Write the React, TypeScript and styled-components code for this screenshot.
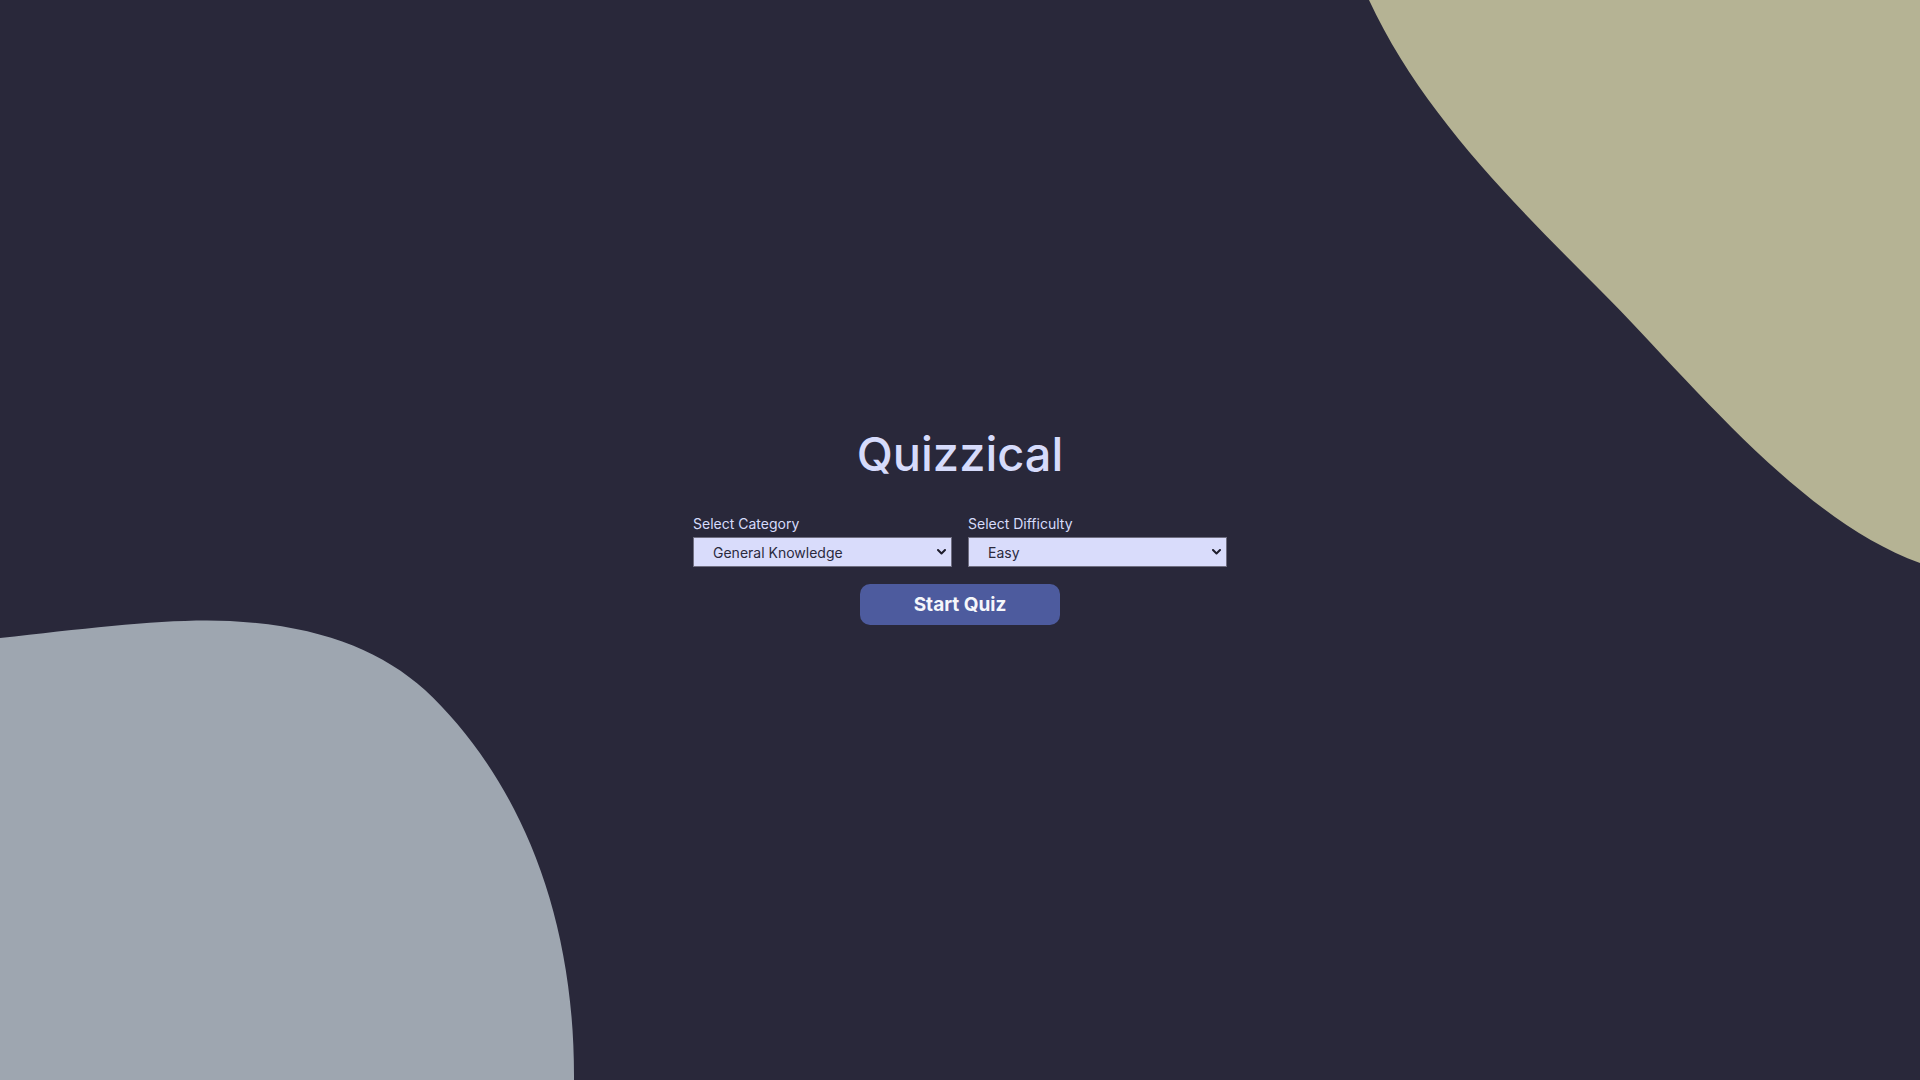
import React, { useState } from "react";
import styled, { createGlobalStyle } from "styled-components";

const GlobalStyle = createGlobalStyle`
  * { box-sizing: border-box; }
  html, body { margin: 0; padding: 0; }
  body {
    background: #29283a;
    font-family: Inter, "Noto Sans", sans-serif;
    overflow: hidden;
  }
`;

const Page = styled.div`
  position: relative;
  width: 100vw;
  height: 100vh;
  display: flex;
  align-items: center;
  justify-content: center;
  overflow: hidden;
`;

const Blobs = styled.svg`
  position: absolute;
  inset: 0;
  width: 100%;
  height: 100%;
  z-index: 0;
  pointer-events: none;
`;

const Main = styled.main`
  position: relative;
  z-index: 1;
  display: flex;
  flex-direction: column;
  align-items: center;
  margin-top: -30px;
`;

const Title = styled.h1`
  margin: 0 0 32px;
  font-size: 47px;
  line-height: 58px;
  font-weight: 500;
  color: #d6dbfb;
`;

const Form = styled.div`
  display: flex;
  gap: 16px;
`;

const Field = styled.label`
  display: flex;
  flex-direction: column;
  gap: 5px;
  width: 259px;
`;

const LabelText = styled.span`
  font-size: 14px;
  line-height: 17px;
  color: #d6dbfb;
`;

const SelectWrap = styled.div`
  position: relative;
  height: 30px;
`;

const Select = styled.select`
  appearance: none;
  width: 100%;
  height: 30px;
  padding: 0 28px 0 19px;
  background: #d9dcfb;
  border: 1px solid #6f6e80;
  border-radius: 0;
  font-family: Inter, "Noto Sans", sans-serif;
  font-size: 14px;
  color: #2b2a3d;
  outline: none;
`;

const Chevron = styled.svg`
  position: absolute;
  right: 6px;
  top: 12px;
  width: 9px;
  height: 6px;
  pointer-events: none;
`;

const StartButton = styled.button`
  margin-top: 17px;
  width: 200px;
  height: 41px;
  border: none;
  border-radius: 10px;
  background: #4d5b9e;
  color: #f5f7fb;
  font-family: Inter, "Noto Sans", sans-serif;
  font-size: 19px;
  font-weight: 700;
  cursor: pointer;
`;

const categories = [
  "General Knowledge",
  "Entertainment: Books",
  "Entertainment: Film",
  "Science & Nature",
  "History",
];

const difficulties = ["Easy", "Medium", "Hard"];

function SelectField({
  label,
  options,
  value,
  onChange,
}: {
  label: string;
  options: string[];
  value: string;
  onChange: (v: string) => void;
}) {
  return (
    <Field>
      <LabelText>{label}</LabelText>
      <SelectWrap>
        <Select value={value} onChange={(e) => onChange(e.target.value)}>
          {options.map((o) => (
            <option key={o} value={o}>
              {o}
            </option>
          ))}
        </Select>
        <Chevron viewBox="0 0 9 6">
          <path
            d="M1 1 L4.5 4.5 L8 1"
            fill="none"
            stroke="#1f1e2c"
            strokeWidth="2"
            strokeLinecap="round"
            strokeLinejoin="round"
          />
        </Chevron>
      </SelectWrap>
    </Field>
  );
}

export default function App() {
  const [category, setCategory] = useState(categories[0]);
  const [difficulty, setDifficulty] = useState(difficulties[0]);
  return (
    <>
      <GlobalStyle />
      <Page>
        <Blobs viewBox="0 0 1920 1080" preserveAspectRatio="none">
          <path
            d="M1369 0 C1420 110 1510 200 1600 290 C1690 380 1800 520 1920 563 L1920 0 Z"
            fill="#b5b394"
          />
          <path
            d="M0 638 C90 628 170 618 230 621 C320 626 380 650 425 690 C510 770 575 900 574 1080 L0 1080 Z"
            fill="#9ea6b0"
          />
        </Blobs>
        <Main>
          <Title>Quizzical</Title>
          <Form>
            <SelectField
              label="Select Category"
              options={categories}
              value={category}
              onChange={setCategory}
            />
            <SelectField
              label="Select Difficulty"
              options={difficulties}
              value={difficulty}
              onChange={setDifficulty}
            />
          </Form>
          <StartButton>Start Quiz</StartButton>
        </Main>
      </Page>
    </>
  );
}
